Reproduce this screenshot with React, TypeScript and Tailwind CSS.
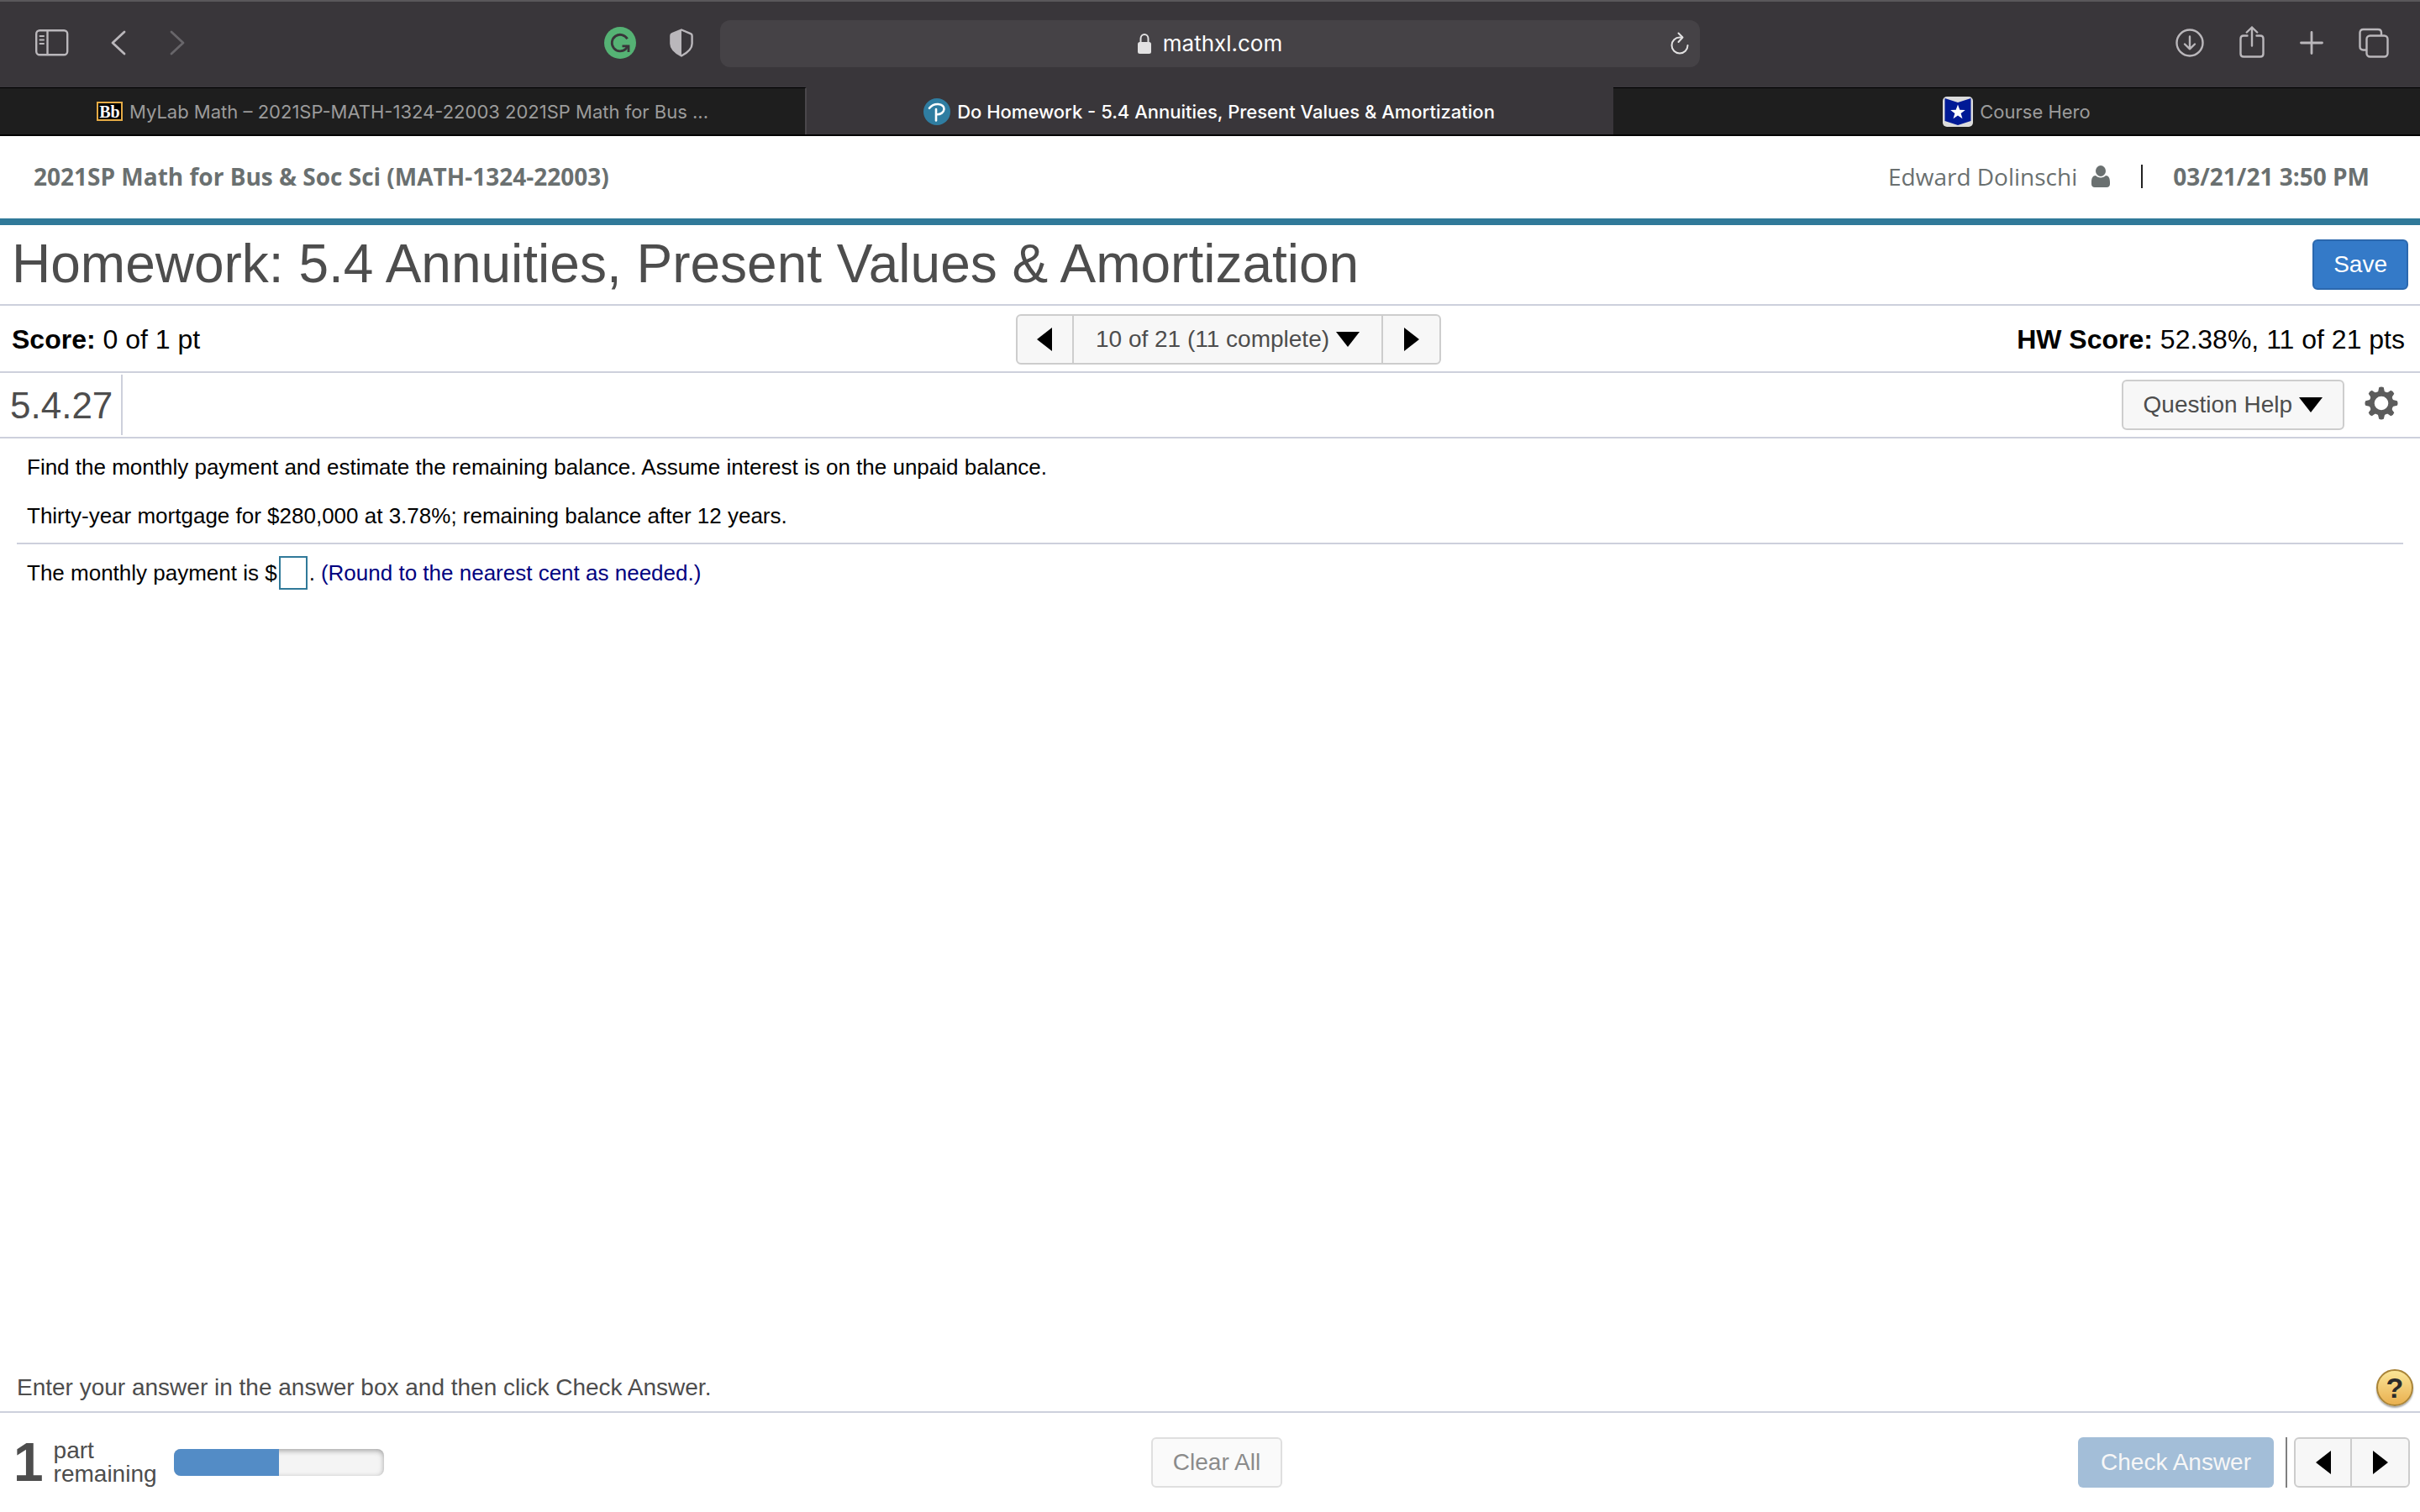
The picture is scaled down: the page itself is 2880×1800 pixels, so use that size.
import type { ReactNode } from "react";

function Triangle({ dir }: { dir: "left" | "right" | "down" }) {
  const d = {
    left: "M18 0V28L0 14Z",
    right: "M0 0V28L18 14Z",
    down: "M0 0H28L14 18Z",
  }[dir];
  const w = dir === "down" ? 28 : 18;
  const h = dir === "down" ? 18 : 28;
  return (
    <svg width={w} height={h} viewBox={`0 0 ${w} ${h}`} aria-hidden="true">
      <path d={d} fill="#000" />
    </svg>
  );
}

function ToolButton({ label, children }: { label: string; children: ReactNode }) {
  return (
    <button type="button" aria-label={label} className="flex shrink-0 items-center justify-center">
      {children}
    </button>
  );
}

function Toolbar() {
  return (
    <div className="grid h-[104px] grid-cols-[1fr_1166px_1fr] items-center border-t-2 border-[#5a585b] bg-[#39363a] pb-[2px] text-[#bab7bb]">
      <div className="flex items-center justify-between pr-8 pb-[2px] pl-[42px]">
        <div className="flex items-center">
          <ToolButton label="Show sidebar">
            <svg width="40" height="32" viewBox="0 0 40 32" fill="none" stroke="currentColor" strokeWidth="2.4">
              <rect x="1.2" y="1.2" width="37" height="29" rx="4" />
              <path d="M14.5 1v29" />
              <path d="M5.500 8H10M5.500 12.500H10M5.500 17H10" strokeWidth="2" strokeLinecap="round" />
            </svg>
          </ToolButton>
          <div className="ml-[50px] flex gap-[52px]">
            <ToolButton label="Back">
              <svg width="18" height="30" viewBox="0 0 18 30" fill="none" stroke="currentColor" strokeWidth="2.8" strokeLinecap="round" strokeLinejoin="round">
                <path d="M16 2 2 15l14 13" />
              </svg>
            </ToolButton>
            <ToolButton label="Forward">
              <svg width="18" height="30" viewBox="0 0 18 30" fill="none" stroke="#68666a" strokeWidth="2.8" strokeLinecap="round" strokeLinejoin="round">
                <path d="m2 2 14 13L2 28" />
              </svg>
            </ToolButton>
          </div>
        </div>
        <div className="flex items-center gap-10">
          <ToolButton label="Grammarly">
            <svg width="38" height="38" viewBox="0 0 38 38" fill="none">
              <circle cx="19" cy="19" r="19" fill="#55b274" />
              <path d="M27.600 14.300A9.800 9.800 0 1 0 26 26l2-3.500" stroke="#39363a" strokeWidth="2.8" />
              <path d="M21.500 22.800H29V30" stroke="#39363a" strokeWidth="2.8" />
            </svg>
          </ToolButton>
          <ToolButton label="Privacy report">
            <svg width="28" height="34" viewBox="0 0 28 34">
              <path d="M14 1.500 25 6.200c1.200.500 1.600 1 1.600 2.300V18c0 6.500-5 10.500-12.600 14.500C6.400 28.500 1.400 24.500 1.400 18V8.500C1.400 7.200 1.800 6.700 3 6.200Z" fill="none" stroke="currentColor" strokeWidth="2.4" strokeLinejoin="round" />
              <path d="M14 1.500v31C6.400 28.500 1.400 24.500 1.400 18V8.500C1.400 7.200 1.800 6.700 3 6.200Z" fill="currentColor" />
            </svg>
          </ToolButton>
        </div>
      </div>

      <div className="grid h-14 grid-cols-[1fr_auto_1fr] items-center rounded-xl bg-[#454246] px-3">
        <span />
        <div className="flex items-center gap-[14px] text-[26px] leading-8 text-white">
          <svg width="16" height="24" viewBox="0 0 16 24" aria-hidden="true">
            <rect y="10" width="16" height="14" rx="2.5" fill="#e2e1e2" />
            <path d="M3.500 11V6a4.500 5 0 0 1 9 0v5" fill="none" stroke="#e2e1e2" strokeWidth="2" />
          </svg>
          mathxl.com
        </div>
        <div className="flex justify-end">
          <ToolButton label="Reload">
            <svg width="24" height="28" viewBox="0 0 24 28" fill="none" stroke="#e2e1e2" strokeWidth="2" strokeLinecap="round" strokeLinejoin="round">
              <path d="M14 6.500h-2a9.500 9.500 0 1 0 9.500 9.500" />
              <path d="m10.500 1.500 5 5-5 5.500" />
            </svg>
          </ToolButton>
        </div>
      </div>

      <div className="flex items-center justify-end gap-[42px] pr-[37px] pb-[2px]">
        <ToolButton label="Downloads">
          <svg width="34" height="34" viewBox="0 0 34 34" fill="none" stroke="currentColor" strokeWidth="2.4" strokeLinecap="round" strokeLinejoin="round">
            <circle cx="17" cy="17" r="15.5" />
            <path d="M17 9.500v14.800M11 18.500l6 5.800 6-5.800" />
          </svg>
        </ToolButton>
        <ToolButton label="Share">
          <svg width="30" height="40" viewBox="0 0 30 40" fill="none" stroke="currentColor" strokeWidth="2.4" strokeLinecap="round" strokeLinejoin="round">
            <path d="M9.500 11.500H5q-3.500 0-3.500 3.500v18q0 3.500 3.500 3.500h20q3.500 0 3.500-3.500V15q0-3.500-3.500-3.500H20.500" />
            <path d="M15 23.500V1.500M8.800 7.500 15 1.500l6.200 6" />
          </svg>
        </ToolButton>
        <ToolButton label="New tab">
          <svg width="28" height="28" viewBox="0 0 28 28" stroke="currentColor" strokeWidth="2.8" strokeLinecap="round">
            <path d="M14 1.500v25M1.500 14h25" />
          </svg>
        </ToolButton>
        <ToolButton label="Tab overview">
          <svg width="36" height="36" viewBox="0 0 36 36" fill="none" stroke="currentColor" strokeWidth="2.4">
            <rect x="9.5" y="9.5" width="25" height="25" rx="4" />
            <path d="M9.500 26.500H5.500q-4 0-4-4V6q0-4 4-4H23q4 0 4 4v3.500" />
          </svg>
        </ToolButton>
      </div>
    </div>
  );
}

function Tab({ icon, title, active }: { icon: ReactNode; title: string; active?: boolean }) {
  const look = active
    ? "border-[#39363a] bg-[#39363a] text-white font-medium"
    : "border-t-black bg-[#1e1e1e] text-[#9b9b9b]";
  return (
    <a
      href="#"
      aria-current={active ? "page" : undefined}
      className={`flex h-14 min-w-0 items-center justify-center gap-2 border-t text-[22px] leading-7 whitespace-nowrap ${look}`}
    >
      {icon}
      {title}
    </a>
  );
}

function BlackboardIcon() {
  return (
    <span className="flex h-[23px] w-[31px] shrink-0 items-center justify-center border-2 border-[#e5ab45] bg-black font-['Liberation_Serif',serif] text-[20px] leading-none font-bold text-white">
      Bb
    </span>
  );
}

function PearsonIcon() {
  return (
    <svg className="shrink-0" width="32" height="32" viewBox="0 0 32 32" fill="none" aria-hidden="true">
      <circle cx="16" cy="16" r="16" fill="#2f7da1" />
      <path d="M7 11.800C10 8 13.500 6.800 17.500 7c4.800.300 7.300 2.800 7 6-.300 3.800-4 6.500-9 6.300" stroke="#fff" strokeWidth="2.6" strokeLinecap="round" />
      <path d="M15 13V26.500" stroke="#fff" strokeWidth="2.6" strokeLinecap="round" />
    </svg>
  );
}

function CourseHeroIcon() {
  return (
    <svg className="shrink-0" width="36" height="36" viewBox="0 0 36 36" aria-hidden="true">
      <rect width="36" height="36" rx="5" fill="#dcdcdc" />
      <path d="M2.500 2 18 7l15.500-5v27L18 34 2.500 29Z" fill="#001a96" />
      <path d="m18 9.500 2.300 6.200 6.500.200-5.200 4 1.900 6.400-5.500-3.800-5.500 3.800 1.900-6.400-5.200-4 6.500-.200Z" fill="#fff" />
    </svg>
  );
}

function StepGroup({ children }: { children?: ReactNode }) {
  return (
    <div className="flex h-[60px] divide-x-2 divide-[#cdcdcd] rounded-md border-2 border-[#cdcdcd] bg-[#f7f7f7]">
      <button type="button" aria-label="Previous" className="flex w-[67px] items-center justify-center">
        <Triangle dir="left" />
      </button>
      {children}
      <button type="button" aria-label="Next" className="flex w-[67px] items-center justify-center">
        <Triangle dir="right" />
      </button>
    </div>
  );
}

export default function App() {
  return (
    <div className="flex min-h-screen flex-col bg-white font-['Liberation_Sans',Arial,sans-serif] text-black">
      <div className="font-['Inter',sans-serif]">
        <Toolbar />
        <nav aria-label="Tabs" className="grid grid-cols-3 divide-x-2 divide-[#4a474b] border-b-2 border-black">
          <Tab icon={<BlackboardIcon />} title="MyLab Math – 2021SP-MATH-1324-22003 2021SP Math for Bus ..." />
          <Tab icon={<PearsonIcon />} title="Do Homework - 5.4 Annuities, Present Values & Amortization" active />
          <Tab icon={<CourseHeroIcon />} title="Course Hero" />
        </nav>
      </div>

      <header className="flex h-[106px] items-center justify-between border-b-8 border-[#307999] pr-[60px] pb-[2px] pl-10 font-['Open_Sans',sans-serif] text-[28px] leading-9 text-[#6a7070]">
        <span className="font-bold">2021SP Math for Bus & Soc Sci (MATH-1324-22003)</span>
        <div className="flex items-center">
          <span>Edward Dolinschi</span>
          <svg className="ml-4" width="24" height="26" viewBox="0 0 24 26" aria-hidden="true">
            <ellipse cx="12" cy="6.5" rx="6" ry="6.5" fill="#6a7070" />
            <path d="M1 20c0-5 1.500-8 5-8 1.500 1.600 3.500 2.500 6 2.500s4.500-.900 6-2.500c3.500 0 5 3 5 8v2c0 2.500-1.500 4-4 4H5c-2.500 0-4-1.500-4-4Z" fill="#6a7070" />
          </svg>
          <span className="mx-9 h-7 w-[2px] bg-[#222]" />
          <span className="font-bold">03/21/21 3:50 PM</span>
        </div>
      </header>

      <div className="flex h-24 items-center justify-between border-b-2 border-[#cdd0dc] px-[14px]">
        <h1 className="pb-[2px] text-[64px] leading-[72px] text-[#4d4d4d]">
          Homework: 5.4 Annuities, Present Values & Amortization
        </h1>
        <button type="button" className="h-[60px] rounded-md border-2 border-[#2b68ae] bg-[#347ac8] px-[23px] text-[28px] text-white">
          Save
        </button>
      </div>

      <div className="grid h-20 grid-cols-[1fr_auto_1fr] items-center border-b-2 border-[#cdd0dc] pt-[2px] pr-[18px] pl-[14px] text-[32px] leading-10">
        <p>
          <b>Score:</b> 0 of 1 pt
        </p>
        <div className="ml-12">
          <StepGroup>
            <button type="button" className="flex items-center gap-2 px-[26px] text-[28px] text-[#4d4d4d]">
              10 of 21 (11 complete)
              <Triangle dir="down" />
            </button>
          </StepGroup>
        </div>
        <p className="text-right">
          <b>HW Score:</b> 52.38%, 11 of 21 pts
        </p>
      </div>

      <div className="flex h-[78px] items-center justify-between border-b-2 border-[#cdd0dc] pr-[26px] pl-3">
        <h2 className="flex h-[72px] items-center border-r-2 border-[#cdd0dc] pt-[2px] pr-[10px] text-[44px] text-[#4d4d4d]">5.4.27</h2>
        <div className="flex items-center gap-6">
          <button type="button" className="flex h-[60px] items-center gap-2 rounded-md border-2 border-[#cdcdcd] bg-[#f7f7f7] px-6 text-[28px] text-[#4d4d4d]">
            Question Help
            <Triangle dir="down" />
          </button>
          <button type="button" aria-label="Settings" className="pb-1">
            <svg width="40" height="40" viewBox="0 0 40 40">
              <g fill="#5c5c5c">
                {[0, 45, 90, 135, 180, 225, 270, 315].map((a) => (
                  <path key={a} d="M14 9Q17 6 17.200 1.200Q20-.300 22.800 1.200Q23 6 26 9Z" transform={`rotate(${a} 20 20)`} />
                ))}
              </g>
              <circle cx="20" cy="20" r="11.3" fill="none" stroke="#5c5c5c" strokeWidth="6" />
            </svg>
          </button>
        </div>
      </div>

      <main className="flex grow flex-col px-5 pt-[18px] text-[26px] leading-8">
        <div className="flex flex-col gap-[26px] border-b-2 border-[#cdd0dc] px-3 pb-4">
          <p>Find the monthly payment and estimate the remaining balance. Assume interest is on the unpaid balance.</p>
          <p>Thirty-year mortgage for $280,000 at 3.78%; remaining balance after 12 years.</p>
        </div>
        <div className="flex items-center px-3 pt-[14px]">
          <label htmlFor="payment">The monthly payment is $</label>
          <input id="payment" type="text" className="mx-[2px] h-10 w-[34px] border-2 border-[#307999] px-1 outline-none" />
          <span>.</span>
          <span className="ml-[7px] text-[#000080]">(Round to the nearest cent as needed.)</span>
        </div>
      </main>

      <div className="flex items-center justify-between border-b-2 border-[#cdd0dc] pr-2 pb-[6px] pl-5 text-[28px] leading-9 text-[#4d4d4d]">
        <p>Enter your answer in the answer box and then click Check Answer.</p>
        <button
          type="button"
          aria-label="Help"
          className="flex size-11 items-center justify-center rounded-full border-2 border-[#a98438] bg-linear-to-b from-[#fae596] to-[#e9b04f] text-[34px] leading-none font-bold text-[#2b2b2b] shadow-[0_2px_2px_rgba(0,0,0,0.35)]"
        >
          ?
        </button>
      </div>

      <footer className="grid h-[118px] grid-cols-[1fr_auto_1fr] items-center pr-3 pl-4 text-[28px] text-[#4d4d4d]">
        <div className="flex items-center">
          <b className="text-[64px] leading-none">1</b>
          <span className="ml-3 leading-7">
            part
            <br />
            remaining
          </span>
          <div className="ml-5 h-8 w-[250px] overflow-hidden rounded-lg bg-[#f4f4f4] shadow-[inset_0_2px_6px_rgba(0,0,0,0.35)]">
            <div className="h-full w-1/2 bg-[#538cc6]" />
          </div>
        </div>
        <button type="button" disabled className="ml-3 h-[60px] rounded-md border-2 border-[#dfdfdf] bg-[#fafafa] px-6 text-[#8b8b8b]">
          Clear All
        </button>
        <div className="flex items-center justify-end">
          <button type="button" disabled className="h-[60px] rounded-md bg-[#a3bed8] px-[27px] text-[#f7f7f7]">
            Check Answer
          </button>
          <span className="mr-2 ml-[14px] h-[60px] w-[2px] bg-[#808080]" />
          <StepGroup />
        </div>
      </footer>
    </div>
  );
}
